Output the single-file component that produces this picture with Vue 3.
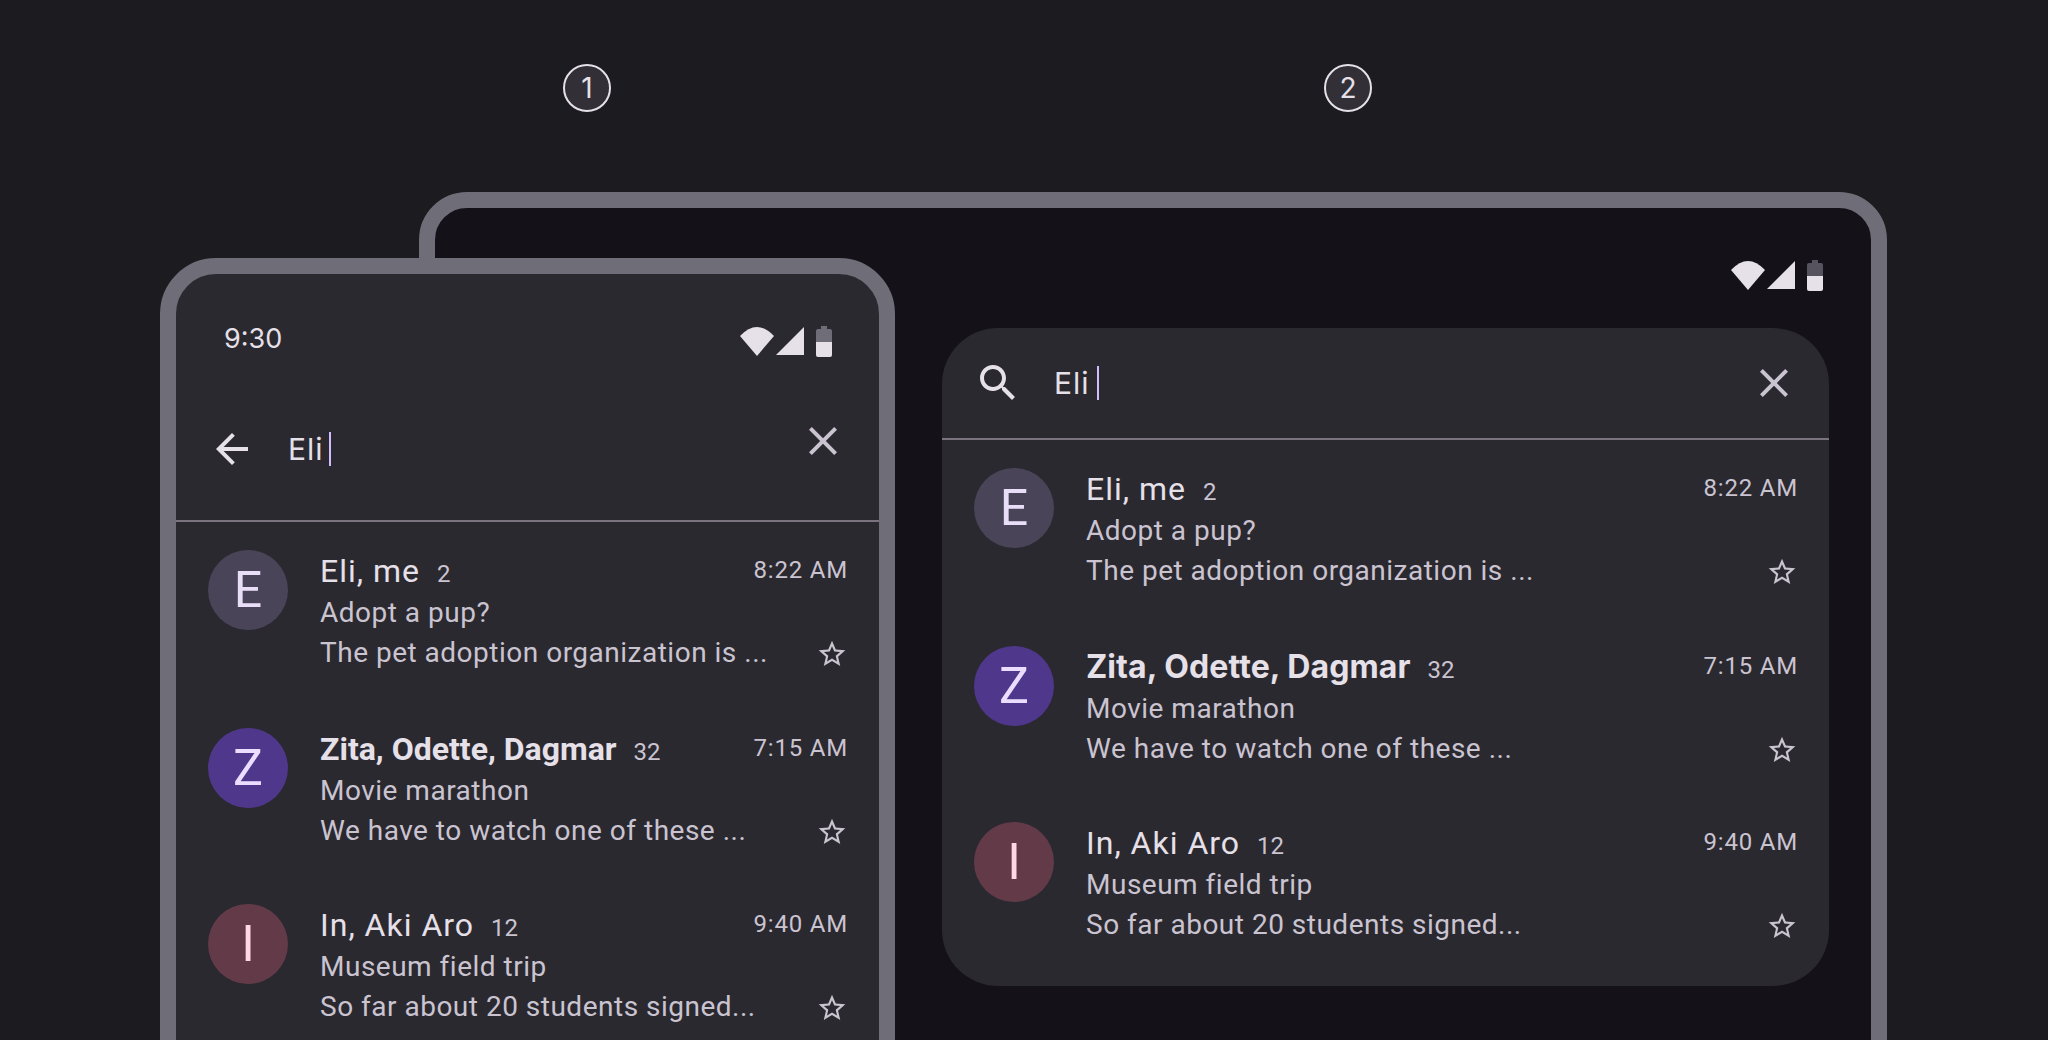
<script setup>
const threads = [
  { initial: "E", tone: "tone-e", name: "Eli, me", count: 2, time: "8:22 AM", subject: "Adopt a pup?", preview: "The pet adoption organization is ..." },
  { initial: "Z", tone: "tone-z", name: "Zita, Odette, Dagmar", unread: true, count: 32, time: "7:15 AM", subject: "Movie marathon", preview: "We have to watch one of these ..." },
  { initial: "I", tone: "tone-i", name: "In, Aki Aro", count: 12, time: "9:40 AM", subject: "Museum field trip", preview: "So far about 20 students signed..." }
];

const panels = [
  { id: "tablet" },
  { id: "phone" }
];

const icons = {
  search: "M15.5 14h-.79l-.28-.27C15.41 12.59 16 11.11 16 9.5 16 5.91 13.09 3 9.5 3S3 5.91 3 9.5 5.91 16 9.5 16c1.61 0 3.09-.59 4.23-1.57l.27.28v.79l5 4.99L20.49 19l-4.99-5zm-6 0C7.01 14 5 11.99 5 9.5S7.01 5 9.5 5 14 7.01 14 9.5 11.99 14 9.5 14z",
  back: "M20 11H7.83l5.59-5.59L12 4l-8 8 8 8 1.41-1.41L7.83 13H20v-2z",
  close: "M19 6.41L17.59 5 12 10.59 6.41 5 5 6.41 10.59 12 5 17.59 6.41 19 12 13.41 17.59 19 19 17.59 13.41 12z",
  star: "M22 9.24l-7.19-.62L12 2 9.19 8.63 2 9.24l5.46 4.73L5.82 21 12 17.27 18.18 21l-1.63-7.03L22 9.24zM12 15.4l-3.76 2.27 1-4.28-3.32-2.88 4.38-.38L12 6.1l1.71 4.04 4.38.38-3.32 2.88 1 4.28L12 15.4z"
};
</script>

<template>
  <main class="stage">
    <div class="markers">
      <span class="marker">1</span>
      <span class="marker">2</span>
    </div>

    <section
      v-for="panel in panels"
      :key="panel.id"
      class="device"
      :class="panel.id"
    >
      <div class="status">
        <span v-if="panel.id === 'phone'" class="clock">9:30</span>
        <svg class="status-icons" width="93" height="31" viewBox="0 0 93 31">
          <path d="M0 10Q17-8 34 10L17 30Z" fill="#e6e0e9" />
          <path d="M36 29L64 1V29Z" fill="#e6e0e9" />
          <path d="M81 0h6v3h3a2 2 0 0 1 2 2v11H76V5a2 2 0 0 1 2-2h3z" :fill="panel.id === 'phone' ? '#6f6d78' : '#56535e'" />
          <path d="M76 16h16v13a2 2 0 0 1-2 2H78a2 2 0 0 1-2-2z" fill="#e6e0e9" />
        </svg>
      </div>

      <div class="sheet">
        <header class="search">
          <svg class="icon lead" viewBox="0 0 24 24">
            <path :d="panel.id === 'phone' ? icons.back : icons.search" />
          </svg>
          <span class="query">Eli<i class="caret"></i></span>
          <svg class="icon clear" viewBox="0 0 24 24"><path :d="icons.close" /></svg>
        </header>

        <ul class="threads">
          <li v-for="t in threads" :key="t.initial" class="thread">
            <span class="avatar" :class="t.tone">{{ t.initial }}</span>
            <div class="body">
              <div class="line-top">
                <span class="name" :class="{ unread: t.unread }">{{ t.name }}</span>
                <span class="count">{{ t.count }}</span>
                <span class="time">{{ t.time }}</span>
              </div>
              <div class="subject">{{ t.subject }}</div>
              <div class="line-bottom">
                <span class="preview">{{ t.preview }}</span>
                <svg class="star" viewBox="0 0 24 24"><path :d="icons.star" /></svg>
              </div>
            </div>
          </li>
        </ul>
      </div>
    </section>
  </main>
</template>

<style>
html, body {
  margin: 0;
  background: #1c1b20;
}
</style>

<style scoped>
.stage {
  position: relative;
  height: 1040px;
  overflow: hidden;
  background: #1c1b20;
  font-family: Roboto, sans-serif;
}
.markers {
  display: flex;
  gap: 713px;
  padding: 64px 0 0 563px;
}
.marker {
  box-sizing: border-box;
  display: flex;
  align-items: center;
  justify-content: center;
  width: 48px;
  height: 48px;
  border: 2px solid #e6e0e9;
  border-radius: 50%;
  background: #322f36;
  color: #e6e0e9;
  font-family: Inter, sans-serif;
  font-size: 28px;
}

.device {
  box-sizing: border-box;
  border: 16px solid #6f6d78;
}
.tablet {
  width: 1468px;
  height: 1000px;
  margin: 80px 0 0 419px;
  padding: 52px 42px 0 507px;
  border-radius: 48px;
  background: #141218;
}
.phone {
  position: absolute;
  left: 160px;
  top: 258px;
  width: 735px;
  height: 900px;
  border-radius: 56px;
  background: #2b2930;
}

.status {
  display: flex;
  align-items: center;
  justify-content: flex-end;
  height: 31px;
  padding-right: 5px;
}
.phone .status {
  justify-content: space-between;
  padding: 52px 46px 0 48px;
}
.clock {
  color: #e6e0e9;
  font-family: Inter, sans-serif;
  font-size: 27px;
  line-height: 31px;
  margin-top: -6px;
}
.status-icons {
  display: block;
}

.sheet {
  margin-top: 37px;
  background: #2b2930;
  border-radius: 56px;
}
.phone .sheet {
  margin-top: 0;
  background: none;
  border-radius: 0;
}

.search {
  box-sizing: border-box;
  display: flex;
  align-items: center;
  height: 112px;
  padding: 0 31px 0 32px;
  border-bottom: 2px solid #79747e;
}
.phone .search {
  height: 165px;
  padding: 21px 32px 0 32px;
}
.icon {
  flex: none;
  width: 48px;
  height: 48px;
  fill: #e6e0e9;
}
.clear {
  fill: #cac4d0;
}
.phone .clear {
  margin-top: -16px;
}
.query {
  flex: 1;
  display: flex;
  align-items: center;
  margin-left: 32px;
  color: #e6e0e9;
  font-family: Inter, sans-serif;
  font-size: 30px;
  line-height: 40px;
  letter-spacing: 1px;
}
.caret {
  width: 2px;
  height: 34px;
  margin-left: 5px;
  background: #d0bcff;
}
.tablet .caret {
  margin-left: 7px;
}

.threads {
  margin: 0;
  padding: 28px 32px 44px;
  list-style: none;
}
.thread {
  display: flex;
  gap: 32px;
  height: 120px;
  margin-bottom: 56px;
}
.thread:first-child {
  margin-bottom: 58px;
}
.thread:last-child {
  margin-bottom: 0;
}
.avatar {
  flex: none;
  display: flex;
  align-items: center;
  justify-content: center;
  width: 80px;
  height: 80px;
  border-radius: 50%;
  font-size: 50px;
}
.tone-e { background: #4a4458; color: #e8def8; }
.tone-z { background: #4f378b; color: #eaddff; }
.tone-i { background: #633b48; color: #ffd8e4; }

.body {
  flex: 1;
  min-width: 0;
  padding-top: 1px;
}
.line-top {
  display: flex;
  align-items: flex-start;
  height: 40px;
  line-height: 40px;
}
.name {
  color: #e6e0e9;
  font-size: 32px;
  letter-spacing: 1px;
}
.name.unread {
  font-weight: 700;
  letter-spacing: 0;
}
.tablet .name.unread {
  font-family: Inter, sans-serif;
  font-size: 32px;
  letter-spacing: 0.1px;
}
.count {
  margin-left: 17px;
  padding-top: 3px;
  color: #cac4d0;
  font-size: 24px;
}
.time {
  margin-left: auto;
  margin-top: -1px;
  margin-right: -1px;
  color: #cac4d0;
  font-size: 24px;
  letter-spacing: 0.8px;
}
.subject, .preview {
  color: #cac4d0;
  font-size: 28px;
  line-height: 40px;
  letter-spacing: 0.5px;
}
.subject {
  margin-top: 2px;
}
.line-bottom {
  display: flex;
  align-items: center;
  justify-content: space-between;
}
.star {
  flex: none;
  width: 32px;
  height: 32px;
  margin-top: 2px;
  margin-right: -1px;
  fill: #cac4d0;
}
</style>
